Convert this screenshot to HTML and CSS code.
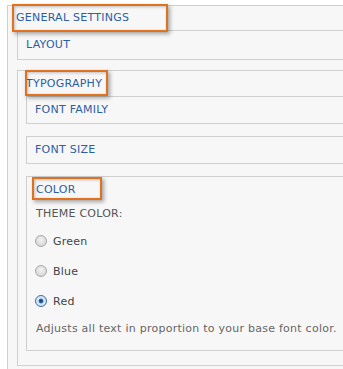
FILE: index.html
```html
<!DOCTYPE html>
<html>
<head>
<meta charset="utf-8">
<link rel="stylesheet" href="styles.css">
</head>
<body>
<div class="outer">
  <div class="outer-head">
    <span class="link">GENERAL SETTINGS</span>
    <div class="mark mark-general"></div>
  </div>
  <div class="outer-body">
    <div class="box box-layout"><span class="link">LAYOUT</span></div>
    <div class="panel panel-typo">
      <div class="panel-head typo-head">
        <span class="link">TYPOGRAPHY</span>
        <div class="mark mark-typo"></div>
      </div>
      <div class="panel-body">
        <div class="box box-inner"><span class="link">FONT FAMILY</span></div>
        <div class="box box-inner"><span class="link">FONT SIZE</span></div>
        <div class="panel panel-color">
          <div class="color-head">
            <span class="link">COLOR</span>
            <div class="mark mark-color"></div>
          </div>
          <div class="theme-label">THEME COLOR:</div>
          <label class="radio-row"><span class="radio"></span><span class="radio-text">Green</span></label>
          <label class="radio-row"><span class="radio"></span><span class="radio-text">Blue</span></label>
          <label class="radio-row"><span class="radio checked"></span><span class="radio-text">Red</span></label>
          <div class="help">Adjusts all text in proportion to your base font color.</div>
        </div>
      </div>
    </div>
  </div>
</div>
</body>
</html>
```

FILE: styles.css
```css
* { box-sizing: border-box; }
html, body { margin: 0; padding: 0; }
body {
  background: #ffffff;
  width: 343px;
  height: 369px;
  overflow: hidden;
  font-family: "DejaVu Sans", Verdana, sans-serif;
  font-size: 11px;
  letter-spacing: 0.25px;
}
.link { color: #2c5ea6; }
.outer {
  margin: 5px 0 0 7px;
  height: 364px;
  background: #f7f7f7;
  border-top: 1px solid #cfcfcf;
  border-left: 1px solid #cfcfcf;
}
.outer-head {
  position: relative;
  height: 24px;
  line-height: 24px;
  padding-left: 8px;
}
.outer-body { padding-left: 9px; }
.box {
  border: 1px solid #cfcfcf;
  border-right: none;
  padding-left: 8px;
}
.box-layout { height: 30px; line-height: 28px; }
.panel {
  border: 1px solid #cfcfcf;
  border-right: none;
}
.panel-typo { margin-top: 10px; padding-bottom: 14px; }
.panel-head {
  position: relative;
  height: 25px;
  line-height: 25px;
  padding-left: 8px;
}
.panel-body { padding-left: 8px; }
.box-inner { height: 28px; line-height: 26px; margin-bottom: 12px; }
.panel-color { padding-left: 9px; padding-bottom: 8px; }
.color-head {
  position: relative;
  height: 25px;
  line-height: 25px;
}
.theme-label { height: 24px; line-height: 24px; color: #555; }
.radio-row {
  display: flex;
  align-items: center;
  height: 30px;
  color: #444;
}
.radio {
  width: 12px;
  height: 12px;
  border-radius: 50%;
  border: 1px solid #a9a9a9;
  background: radial-gradient(circle at 50% 40%, #f4f4f4 0%, #dcdcdc 60%, #c9c9c9 100%);
  margin-left: -1px;
  margin-right: 6px;
  flex: none;
}
.radio.checked {
  border-color: #3a6fa8;
  background: radial-gradient(circle, #0f3f7a 0%, #2a68b0 28%, #dfe9f5 40%, #c8d6e8 100%);
}
.help { height: 26px; line-height: 26px; color: #666; white-space: nowrap; }
.mark {
  position: absolute;
  border: 2px solid #e0721f;
  box-shadow: 2px 2px 4px rgba(60, 60, 60, 0.45), inset 1px 1px 3px rgba(80, 80, 80, 0.35);
}
.mark-general { left: 4px; top: -2px; width: 156px; height: 28px; }
.mark-typo { left: 7px; top: -1px; width: 83px; height: 26px; }
.mark-color { left: -4px; top: 0; width: 70px; height: 23px; }
```
